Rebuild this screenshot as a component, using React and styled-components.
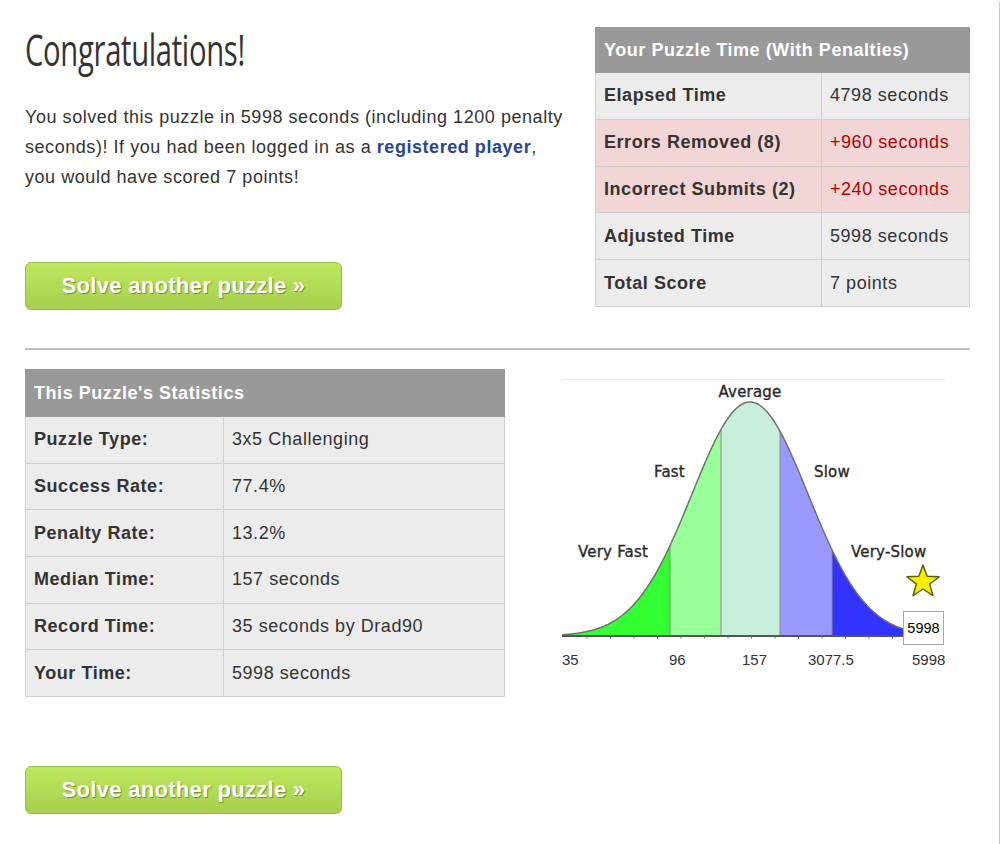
import React from 'react';
import styled, { createGlobalStyle } from 'styled-components';

const GlobalStyle = createGlobalStyle`
  html, body { margin: 0; padding: 0; background: #fff; }
  body { font-family: "Liberation Sans", Arial, sans-serif; color: #333; }
`;

const scoreRows = [
  { label: 'Elapsed Time', value: '4798 seconds' },
  { label: 'Errors Removed (8)', value: '+960 seconds', penalty: true },
  { label: 'Incorrect Submits (2)', value: '+240 seconds', penalty: true },
  { label: 'Adjusted Time', value: '5998 seconds' },
  { label: 'Total Score', value: '7 points' },
];

const statRows = [
  { label: 'Puzzle Type:', value: '3x5 Challenging' },
  { label: 'Success Rate:', value: '77.4%' },
  { label: 'Penalty Rate:', value: '13.2%' },
  { label: 'Median Time:', value: '157 seconds' },
  { label: 'Record Time:', value: '35 seconds by Drad90' },
  { label: 'Your Time:', value: '5998 seconds' },
];

// bell curve geometry (chart-local coords)
const BASE = 258;
const PEAK_X = 188;
const PEAK_H = 234;
const SIGMA = 58;
const curveY = (x) => BASE - PEAK_H * Math.exp(-((x - PEAK_X) ** 2) / (2 * SIGMA * SIGMA));

const segmentPath = (x0, x1) => {
  let d = `M${x0},${BASE}`;
  for (let x = x0; x <= x1; x += 1) d += ` L${x},${curveY(x).toFixed(2)}`;
  d += ` L${x1},${curveY(x1).toFixed(2)} L${x1},${BASE} Z`;
  return d;
};

const outlinePath = (() => {
  let d = `M0,${curveY(0).toFixed(2)}`;
  for (let x = 1; x <= 345; x += 1) d += ` L${x},${curveY(x).toFixed(2)}`;
  return d;
})();

const segments = [
  { from: 0, to: 108, color: '#33ff33' },
  { from: 108, to: 159, color: '#99ff99' },
  { from: 159, to: 218, color: '#c8efdc' },
  { from: 218, to: 270, color: '#9999ff' },
  { from: 270, to: 345, color: '#3333ff' },
];

const starPoints = (cx, cy, ro, ri) => {
  const pts = [];
  for (let i = 0; i < 10; i++) {
    const r = i % 2 === 0 ? ro : ri;
    const a = -Math.PI / 2 + (i * Math.PI) / 5;
    pts.push(`${(cx + r * Math.cos(a)).toFixed(2)},${(cy + r * Math.sin(a)).toFixed(2)}`);
  }
  return pts.join(' ');
};

function TimeChart() {
  const ticks = [];
  for (let x = 25; x < 345; x += 23.5) ticks.push(x);
  return (
    <ChartSvg width="385" height="292" viewBox="0 0 385 292">
      <line x1="0" y1="1.5" x2="383" y2="1.5" stroke="#e8e8e8" strokeWidth="1" />
      {segments.map((s) => (
        <path key={s.from} d={segmentPath(s.from, s.to)} fill={s.color} />
      ))}
      {segments.slice(1).map((s) => (
        <line key={s.from} x1={s.from} y1={curveY(s.from)} x2={s.from} y2={BASE} stroke="#8a8a8a" strokeWidth="1" />
      ))}
      <path d={outlinePath} fill="none" stroke="#707070" strokeWidth="1.5" />
      <line x1="0" y1={BASE} x2="345" y2={BASE} stroke="#555" strokeWidth="2" />
      {ticks.map((x) => (
        <line key={x} x1={x} y1={BASE} x2={x} y2={BASE + 2.5} stroke="#666" strokeWidth="1" />
      ))}
      <g
        fontFamily='"DejaVu Sans", sans-serif'
        fontSize="15"
        letterSpacing="0.2"
        fill="#2a2a2a"
        stroke="#2a2a2a"
        strokeWidth="0.35"
      >
        <text x="188" y="19" textAnchor="middle">Average</text>
        <text x="92" y="99">Fast</text>
        <text x="252" y="99">Slow</text>
        <text x="16" y="179">Very Fast</text>
        <text x="289" y="179">Very-Slow</text>
      </g>
      <polygon points={starPoints(361, 204, 17, 7)} fill="#f5ee00" stroke="#5e5e00" strokeWidth="1.5" strokeLinejoin="round" />
      <rect x="341.5" y="233.5" width="40" height="33" fill="#fff" stroke="#aaa" strokeWidth="1" />
      <text x="361.5" y="255" textAnchor="middle" fontFamily='"Liberation Sans", Arial, sans-serif' fontSize="14.5" fill="#000">5998</text>
      <g fontFamily='"Liberation Sans", Arial, sans-serif' fontSize="15" fill="#333">
        <text x="0" y="287">35</text>
        <text x="107" y="287">96</text>
        <text x="180" y="287">157</text>
        <text x="246" y="287">3077.5</text>
        <text x="350" y="287">5998</text>
      </g>
    </ChartSvg>
  );
}

export default function App() {
  return (
    <>
      <GlobalStyle />
      <Frame>
        <TopSection>
          <Intro>
            <Title><TitleText>Congratulations!</TitleText></Title>
            <Lead>
              You solved this puzzle in 5998 seconds (including 1200 penalty seconds)! If you had
              been logged in as a <Link href="#">registered player</Link>, you would have scored 7 points!
            </Lead>
            <SolveButton href="#">Solve another puzzle »</SolveButton>
          </Intro>
          <DataTable $width={375} $labelWidth={226} $top={7}>
            <thead>
              <tr><HeadCell colSpan={2} $height={44}>Your Puzzle Time (With Penalties)</HeadCell></tr>
            </thead>
            <tbody>
              {scoreRows.map((r) => (
                <Row key={r.label} $penalty={r.penalty}>
                  <LabelCell $height={45.8}>{r.label}</LabelCell>
                  <ValueCell $height={45.8} $red={r.penalty}>{r.value}</ValueCell>
                </Row>
              ))}
            </tbody>
          </DataTable>
        </TopSection>

        <Divider />

        <StatsSection>
          <DataTable $width={480} $labelWidth={198} $top={0}>
            <thead>
              <tr><HeadCell colSpan={2} $height={46}>This Puzzle's Statistics</HeadCell></tr>
            </thead>
            <tbody>
              {statRows.map((r) => (
                <Row key={r.label}>
                  <LabelCell $height={45.7}>{r.label}</LabelCell>
                  <ValueCell $height={45.7}>{r.value}</ValueCell>
                </Row>
              ))}
            </tbody>
          </DataTable>
          <ChartWrap>
            <TimeChart />
          </ChartWrap>
        </StatsSection>

        <BottomActions>
          <SolveButton href="#">Solve another puzzle »</SolveButton>
        </BottomActions>
      </Frame>
    </>
  );
}

const Frame = styled.div`
  box-sizing: border-box;
  width: 1000px;
  min-height: 844px;
  padding: 20px 29px 0 25px;
  border-right: 1px solid #c8c8c8;
  border-top-right-radius: 4px;
  background: #fff;
`;

const TopSection = styled.div`
  display: flex;
  justify-content: space-between;
  align-items: flex-start;
`;

const Intro = styled.div`
  width: 545px;
`;

const Title = styled.h1`
  margin: 3px 0 0;
  height: 52px;
  font-family: "Open Sans", sans-serif;
  font-weight: 400;
  font-size: 44px;
  line-height: 52px;
  color: #333;
  letter-spacing: -0.5px;
  white-space: nowrap;
`;

const TitleText = styled.span`
  display: inline-block;
  transform: scaleX(0.665);
  transform-origin: left center;
`;

const Lead = styled.p`
  margin: 27px 0 0;
  font-size: 18px;
  line-height: 30px;
  letter-spacing: 0.55px;
  color: #333;
`;

const Link = styled.a`
  color: #2b4590;
  font-weight: 700;
  text-decoration: none;
`;

const SolveButton = styled.a`
  box-sizing: border-box;
  display: flex;
  align-items: center;
  justify-content: center;
  width: 317px;
  height: 48px;
  margin-top: 70px;
  border: 1px solid #93c43f;
  border-radius: 6px;
  background: linear-gradient(to bottom, #c0e55f 0%, #b2dc55 50%, #a5cf4e 100%);
  color: #fff;
  font-size: 22px;
  font-weight: 700;
  letter-spacing: 0.3px;
  text-decoration: none;
  text-shadow: 1px 1px 1px rgba(60, 80, 30, 0.55);
`;

const DataTable = styled.table`
  width: ${(p) => p.$width}px;
  margin-top: ${(p) => p.$top}px;
  border-collapse: collapse;
  border: 1px solid #cfcfcf;
  font-size: 18px;
  letter-spacing: 0.55px;
  flex-shrink: 0;

  td:first-child {
    width: ${(p) => p.$labelWidth - 17}px;
  }
`;

const HeadCell = styled.th`
  height: ${(p) => p.$height}px;
  padding: 0 8px;
  background: #999;
  color: #fff;
  font-weight: 700;
  text-align: left;
  border: 1px solid #999;
`;

const Row = styled.tr`
  background: ${(p) => (p.$penalty ? '#f2d6d6' : '#ececec')};
`;

const LabelCell = styled.td`
  height: ${(p) => p.$height || 46}px;
  padding: 0 8px;
  border: 1px solid #cfcfcf;
  font-weight: 700;
  color: #333;
`;

const ValueCell = styled.td`
  height: ${(p) => p.$height || 46}px;
  padding: 0 8px;
  border: 1px solid #cfcfcf;
  color: ${(p) => (p.$red ? '#b20000' : '#333')};
`;

const Divider = styled.hr`
  height: 2px;
  margin: 38px 0 0;
  border: 0;
  background: #bfbfbf;
`;

const StatsSection = styled.div`
  display: flex;
  align-items: flex-start;
  margin-top: 19px;
`;

const ChartWrap = styled.div`
  margin: 9px 0 0 57px;
`;

const ChartSvg = styled.svg`
  display: block;
`;

const BottomActions = styled.div`
  padding-bottom: 30px;
  margin-top: -1px;
`;
